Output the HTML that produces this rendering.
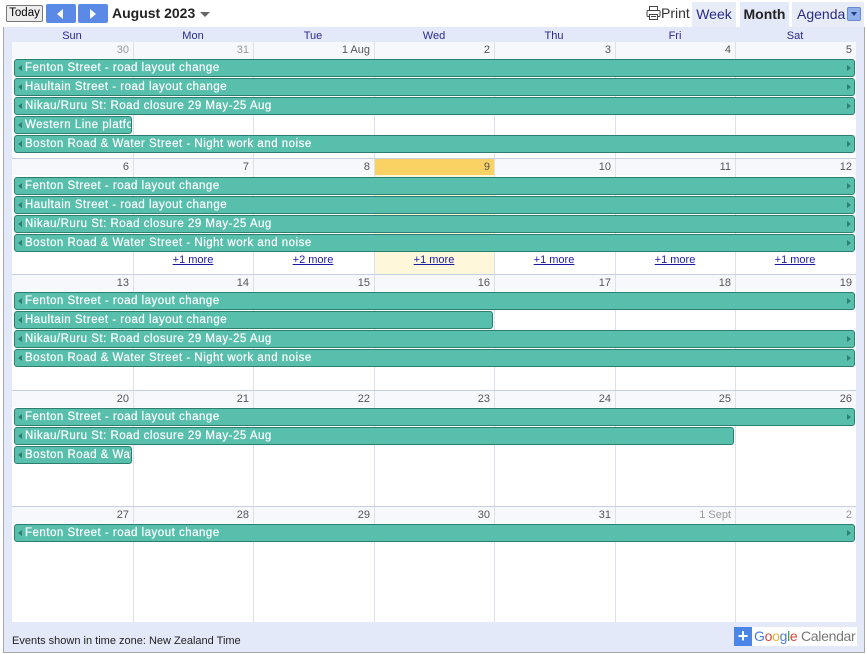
<!DOCTYPE html>
<html><head><meta charset="utf-8"><style>
*{margin:0;padding:0;box-sizing:border-box}
body{width:867px;height:654px;background:#fff;font-family:"Liberation Sans",Arial,sans-serif;position:relative;overflow:hidden}
.a{position:absolute}
#frame{left:3px;top:27px;width:862px;height:626px;background:#e3e9f8;border:1px solid #a8a8a8;border-top:none}
.dh{top:30px;font-size:11px;color:#2a2a8a;text-align:center;width:120px}
.wk{background:#fff}
.vl{width:1px;background:#dde2ea}
.hl{height:1px;background:#c8d0e0}
.num{font-size:11px;color:#555;text-align:right;height:16px;line-height:17px;padding-right:4px;background:#f6f8fc}
.gray{color:#999}
.ev{height:18px;background:#58bfac;border:1px solid #2c7f70;border-radius:3px;color:#fff;font-size:11.5px;line-height:17px;padding-left:10px;white-space:nowrap;overflow:hidden;letter-spacing:0.5px;-webkit-text-stroke:0.2px #fff}
.ev:before{content:"";position:absolute;left:3px;top:5px;border-right:4px solid #2c7f70;border-top:3.5px solid transparent;border-bottom:3.5px solid transparent}
.ev.r:after{content:"";position:absolute;right:3px;top:5px;border-left:4px solid #2c7f70;border-top:3.5px solid transparent;border-bottom:3.5px solid transparent}
.more{font-size:11px;color:#1a1aa6;text-decoration:underline;text-align:center;width:120px}
.btn{border:1px solid #777;border-radius:2px;background:#eee;font-size:12px}
</style></head><body>
<div class="a" id="frame"></div>
<div class="a btn" style="left:6px;top:5px;width:37px;height:17px;line-height:15px;text-align:center;font-size:11.5px">Today</div>
<div class="a" style="left:46px;top:4px;width:30px;height:19px;background:#5b8ae6;border-radius:2px"></div>
<div class="a" style="left:57px;top:9px;border-right:6px solid #fff;border-top:5px solid transparent;border-bottom:5px solid transparent"></div>
<div class="a" style="left:78px;top:4px;width:30px;height:19px;background:#5b8ae6;border-radius:2px"></div>
<div class="a" style="left:90px;top:9px;border-left:6px solid #fff;border-top:5px solid transparent;border-bottom:5px solid transparent"></div>
<div class="a" style="left:112px;top:5px;font-size:14px;font-weight:bold;color:#222">August 2023</div>
<div class="a" style="left:200px;top:12px;border-top:5px solid #666;border-left:5px solid transparent;border-right:5px solid transparent"></div>
<svg class="a" style="left:646px;top:5px" width="15" height="16" viewBox="0 0 15 16"><rect x="3.5" y="1.5" width="8" height="4" fill="none" stroke="#444"/><rect x="1" y="5.5" width="13" height="6" rx="1" fill="none" stroke="#444"/><rect x="3.5" y="9.5" width="8" height="5" fill="#fff" stroke="#444"/><line x1="5" y1="11.5" x2="10" y2="11.5" stroke="#444"/></svg>
<div class="a" style="left:661px;top:5px;font-size:14px;color:#333">Print</div>
<div class="a" style="left:692px;top:2px;width:44px;height:25px;background:#e8ecf7;font-size:14px;color:#2a2a8a;text-align:center;line-height:25px">Week</div>
<div class="a" style="left:740px;top:2px;width:49px;height:25px;background:#e3e9f8;font-size:14px;font-weight:bold;color:#222;text-align:center;line-height:25px">Month</div>
<div class="a" style="left:792px;top:2px;width:72px;height:25px;background:#e8ecf7;font-size:14px;color:#2a2a8a;line-height:25px;padding-left:5px">Agenda</div>
<div class="a" style="left:847px;top:7px;width:14px;height:14px;background:#8fb0e8;border:1px solid #6a8acb;border-radius:2px"></div>
<div class="a" style="left:851px;top:12px;border-top:4px solid #223d8a;border-left:3.5px solid transparent;border-right:3.5px solid transparent"></div>

<div class="a dh" style="left:12px">Sun</div><div class="a dh" style="left:133px">Mon</div><div class="a dh" style="left:253px">Tue</div><div class="a dh" style="left:374px">Wed</div><div class="a dh" style="left:494px">Thu</div><div class="a dh" style="left:615px">Fri</div><div class="a dh" style="left:735px">Sat</div>

<div class="a wk" style="left:12px;top:42px;width:844px;height:580px"></div>
<div class="a vl" style="left:133px;top:42px;height:580px"></div>
<div class="a vl" style="left:253px;top:42px;height:580px"></div>
<div class="a vl" style="left:374px;top:42px;height:580px"></div>
<div class="a vl" style="left:494px;top:42px;height:580px"></div>
<div class="a vl" style="left:615px;top:42px;height:580px"></div>
<div class="a vl" style="left:735px;top:42px;height:580px"></div>
<div class="a hl" style="left:12px;top:158px;width:844px"></div>
<div class="a hl" style="left:12px;top:274px;width:844px"></div>
<div class="a hl" style="left:12px;top:390px;width:844px"></div>
<div class="a hl" style="left:12px;top:506px;width:844px"></div>

<div class="a num gray" style="left:12px;top:42px;width:121px">30</div>
<div class="a num gray" style="left:134px;top:42px;width:119px">31</div>
<div class="a num" style="left:254px;top:42px;width:120px">1 Aug</div>
<div class="a num" style="left:375px;top:42px;width:119px">2</div>
<div class="a num" style="left:495px;top:42px;width:120px">3</div>
<div class="a num" style="left:616px;top:42px;width:119px">4</div>
<div class="a num" style="left:736px;top:42px;width:120px">5</div>
<div class="a ev r" style="left:14px;top:59px;width:841px">Fenton Street - road layout change</div>
<div class="a ev r" style="left:14px;top:78px;width:841px">Haultain Street - road layout change</div>
<div class="a ev r" style="left:14px;top:97px;width:841px">Nikau/Ruru St: Road closure 29 May-25 Aug</div>
<div class="a ev" style="left:14px;top:116px;width:118px">Western Line platform</div>
<div class="a ev r" style="left:14px;top:135px;width:841px">Boston Road &amp; Water Street - Night work and noise</div>

<div class="a" style="left:375px;top:175px;width:119px;height:99px;background:#fff7d9"></div>
<div class="a num" style="left:12px;top:159px;width:121px">6</div>
<div class="a num" style="left:134px;top:159px;width:119px">7</div>
<div class="a num" style="left:254px;top:159px;width:120px">8</div>
<div class="a num" style="left:375px;top:159px;width:119px;background:#fad163">9</div>
<div class="a num" style="left:495px;top:159px;width:120px">10</div>
<div class="a num" style="left:616px;top:159px;width:119px">11</div>
<div class="a num" style="left:736px;top:159px;width:120px">12</div>
<div class="a ev r" style="left:14px;top:177px;width:841px">Fenton Street - road layout change</div>
<div class="a ev r" style="left:14px;top:196px;width:841px">Haultain Street - road layout change</div>
<div class="a ev r" style="left:14px;top:215px;width:841px">Nikau/Ruru St: Road closure 29 May-25 Aug</div>
<div class="a ev r" style="left:14px;top:234px;width:841px">Boston Road &amp; Water Street - Night work and noise</div>
<div class="a more" style="left:133px;top:254px">+1 more</div>
<div class="a more" style="left:253px;top:254px">+2 more</div>
<div class="a more" style="left:374px;top:254px">+1 more</div>
<div class="a more" style="left:494px;top:254px">+1 more</div>
<div class="a more" style="left:615px;top:254px">+1 more</div>
<div class="a more" style="left:735px;top:254px">+1 more</div>

<div class="a num" style="left:12px;top:275px;width:121px">13</div>
<div class="a num" style="left:134px;top:275px;width:119px">14</div>
<div class="a num" style="left:254px;top:275px;width:120px">15</div>
<div class="a num" style="left:375px;top:275px;width:119px">16</div>
<div class="a num" style="left:495px;top:275px;width:120px">17</div>
<div class="a num" style="left:616px;top:275px;width:119px">18</div>
<div class="a num" style="left:736px;top:275px;width:120px">19</div>
<div class="a ev r" style="left:14px;top:292px;width:841px">Fenton Street - road layout change</div>
<div class="a ev" style="left:14px;top:311px;width:479px">Haultain Street - road layout change</div>
<div class="a ev r" style="left:14px;top:330px;width:841px">Nikau/Ruru St: Road closure 29 May-25 Aug</div>
<div class="a ev r" style="left:14px;top:349px;width:841px">Boston Road &amp; Water Street - Night work and noise</div>

<div class="a num" style="left:12px;top:391px;width:121px">20</div>
<div class="a num" style="left:134px;top:391px;width:119px">21</div>
<div class="a num" style="left:254px;top:391px;width:120px">22</div>
<div class="a num" style="left:375px;top:391px;width:119px">23</div>
<div class="a num" style="left:495px;top:391px;width:120px">24</div>
<div class="a num" style="left:616px;top:391px;width:119px">25</div>
<div class="a num" style="left:736px;top:391px;width:120px">26</div>
<div class="a ev r" style="left:14px;top:408px;width:841px">Fenton Street - road layout change</div>
<div class="a ev" style="left:14px;top:427px;width:720px">Nikau/Ruru St: Road closure 29 May-25 Aug</div>
<div class="a ev" style="left:14px;top:446px;width:118px">Boston Road &amp; Water Street</div>

<div class="a num" style="left:12px;top:507px;width:121px">27</div>
<div class="a num" style="left:134px;top:507px;width:119px">28</div>
<div class="a num" style="left:254px;top:507px;width:120px">29</div>
<div class="a num" style="left:375px;top:507px;width:119px">30</div>
<div class="a num" style="left:495px;top:507px;width:120px">31</div>
<div class="a num gray" style="left:616px;top:507px;width:119px">1 Sept</div>
<div class="a num gray" style="left:736px;top:507px;width:120px">2</div>
<div class="a ev r" style="left:14px;top:524px;width:841px">Fenton Street - road layout change</div>

<div class="a" style="left:12px;top:635px;font-size:11px;color:#222">Events shown in time zone: New Zealand Time</div>
<div class="a" style="left:734px;top:627px;width:123px;height:19px;background:#fff"></div>
<div class="a" style="left:734px;top:627px;width:18px;height:19px;background:#4a86e8;color:#fff;font-size:18px;line-height:18px;text-align:center;font-weight:bold">+</div>
<div class="a" style="left:754px;top:628px;font-size:14px;letter-spacing:-0.3px"><span style="color:#4a7fd6">G</span><span style="color:#d9463a">o</span><span style="color:#e8b52e">o</span><span style="color:#4a7fd6">g</span><span style="color:#3a9c4b">l</span><span style="color:#d9463a">e</span><span style="color:#777"> Calendar</span></div>
</body></html>
